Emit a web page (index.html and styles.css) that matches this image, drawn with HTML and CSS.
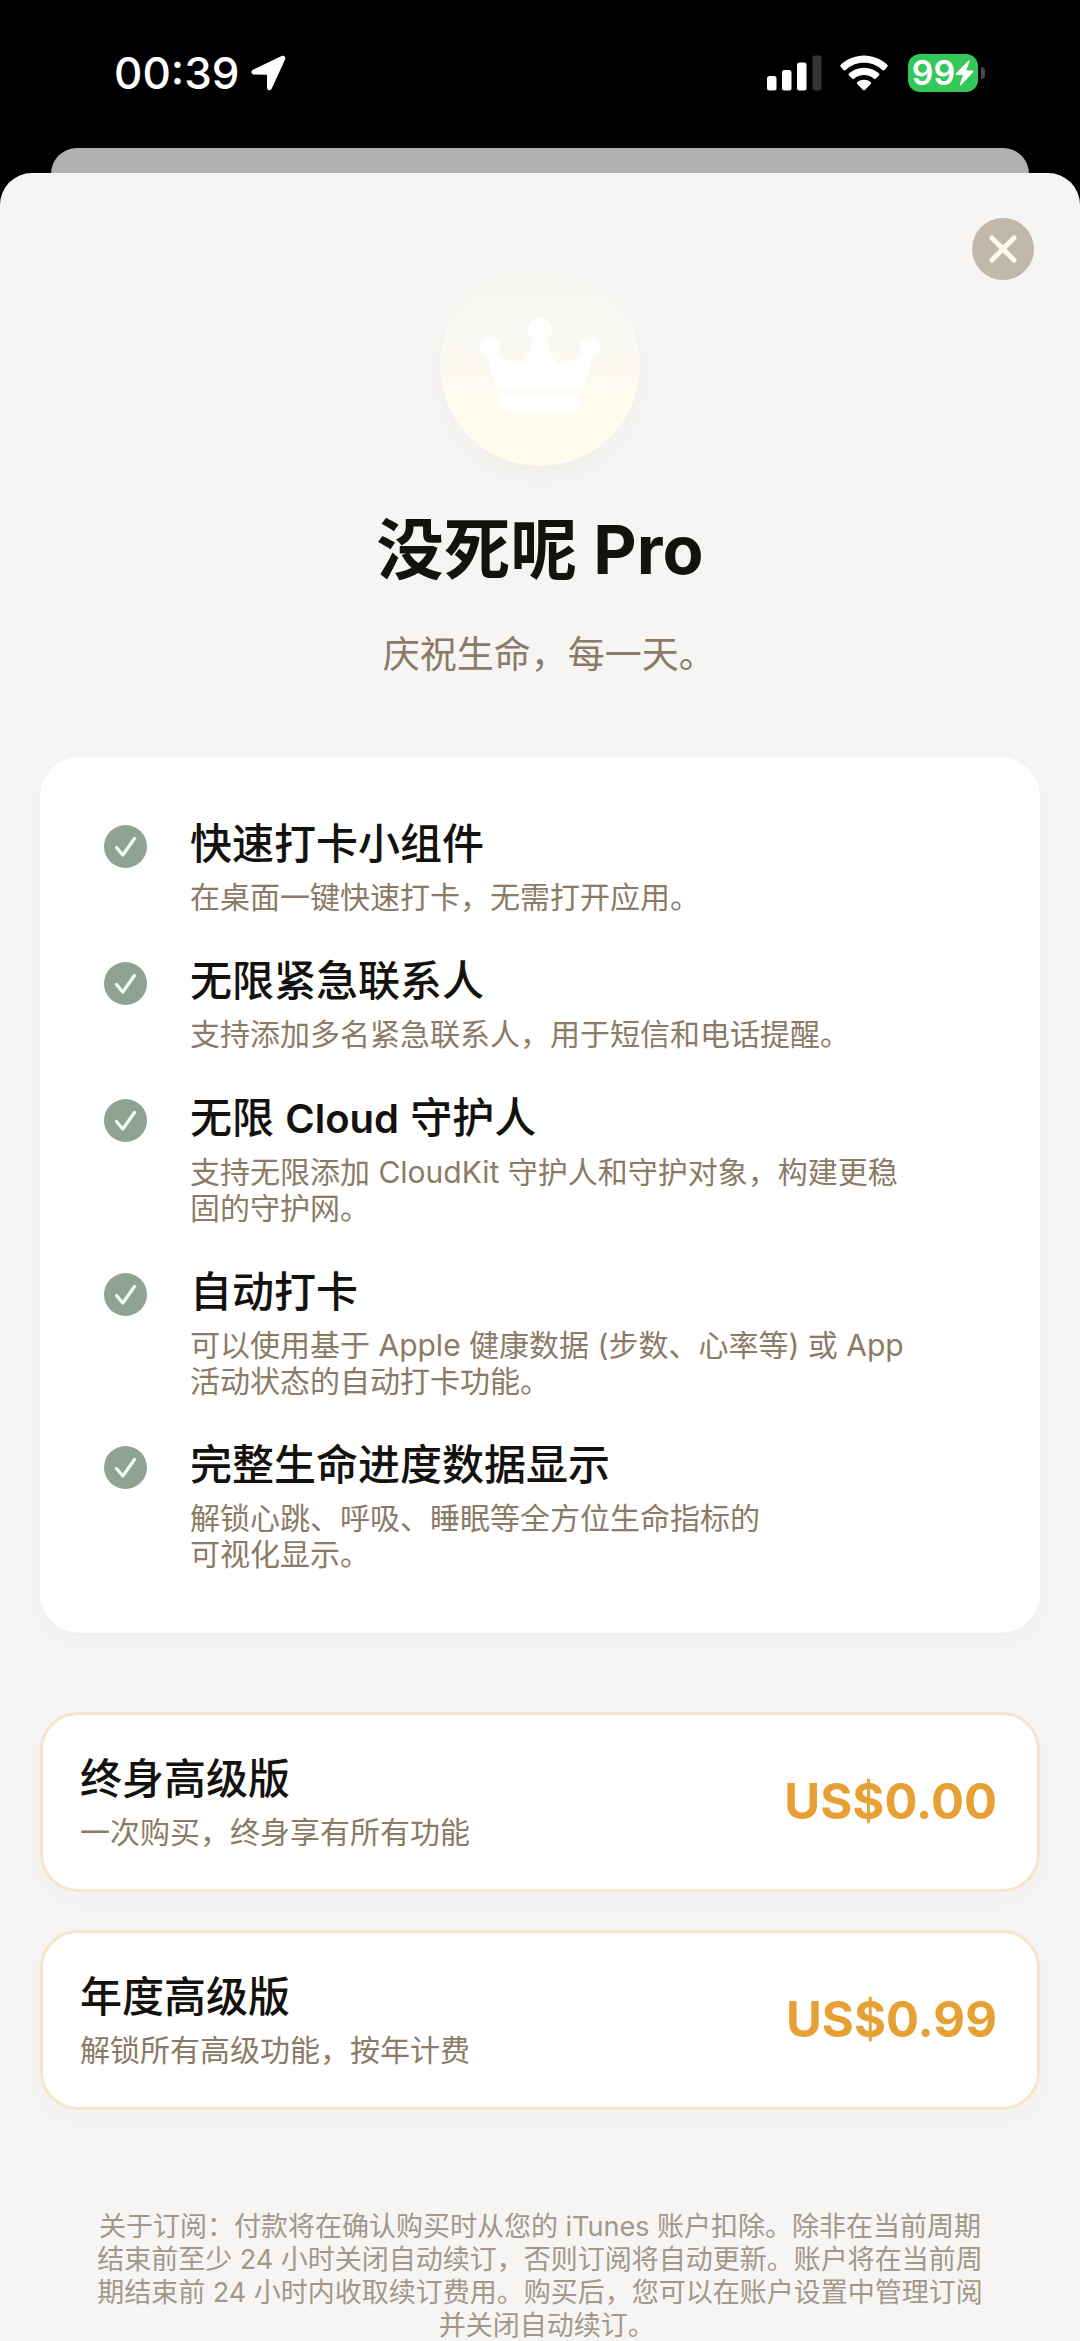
FILE: index.html
```
<!DOCTYPE html>
<html lang="zh-CN">
<head>
<meta charset="utf-8">
<meta name="viewport" content="width=device-width, initial-scale=1">
<title>没死呢 Pro</title>
<link rel="stylesheet" href="styles.css">
</head>
<body>
<svg class="defs" width="0" height="0" aria-hidden="true">
  <symbol id="check" viewBox="0 0 43 43">
    <circle cx="21.500" cy="21.500" r="21.500" fill="#8fa393"/>
    <path d="M12.500 22.500 L18.800 30 L30.500 13.500" fill="none" stroke="#f4fff4" stroke-width="3.200" stroke-linecap="round" stroke-linejoin="round"/>
  </symbol>
</svg>
<header class="status">
  <div class="status-left">
    <span class="time">00:39</span>
    <svg width="35" height="36" viewBox="0 0 35 36" aria-hidden="true">
      <path d="M2.500 14.600 L30.500 1 C33 0 35 1.500 34.200 4.200 L20.800 33.500 C19.400 36.300 16 35.800 16 32.500 L16 19.800 L3 19.600 C0 19.400 -0.600 16.200 2.500 14.600 Z" fill="#fff"/>
    </svg>
  </div>
  <div class="status-right">
    <svg width="55" height="36" viewBox="0 0 55 36" aria-hidden="true">
      <rect x="0" y="21" width="9.500" height="14.500" rx="2.500" fill="#fff"/>
      <rect x="15" y="15" width="9.500" height="20.500" rx="2.500" fill="#fff"/>
      <rect x="30" y="7.500" width="9.500" height="28" rx="2.500" fill="#fff"/>
      <rect x="45.500" y="0.500" width="9" height="35" rx="2.500" fill="#343434"/>
    </svg>
    <svg class="wifi" width="48" height="36" viewBox="0 0 48 36" aria-hidden="true">
      <path d="M24 0.500 C33 0.500 41 4 47 9.600 C47.900 10.400 47.900 11.200 47.200 12 L44.400 14.900 C43.700 15.600 42.900 15.500 42.200 14.900 C37.300 10.400 31 7.800 24 7.800 C17 7.800 10.700 10.400 5.800 14.900 C5.100 15.500 4.300 15.600 3.600 14.900 L0.800 12 C0.100 11.200 0.100 10.400 1 9.600 C7 4 15 0.500 24 0.500 Z" fill="#fff"/>
      <path d="M24 12.700 C29.800 12.700 34.800 14.800 38.800 18.300 C39.600 19 39.600 19.800 38.900 20.500 L35.900 23.500 C35.200 24.200 34.500 24.200 33.700 23.500 C31.100 21.200 27.800 19.900 24 19.900 C20.200 19.900 16.900 21.200 14.300 23.500 C13.500 24.200 12.800 24.200 12.100 23.500 L9.100 20.500 C8.400 19.800 8.400 19 9.200 18.300 C13.200 14.800 18.200 12.700 24 12.700 Z" fill="#fff"/>
      <path d="M24 24.700 C26.500 24.700 28.700 25.500 30.500 26.900 C31.400 27.600 31.400 28.300 30.700 29 L25.200 34.700 C24.400 35.500 23.600 35.500 22.800 34.700 L17.300 29 C16.600 28.300 16.600 27.600 17.500 26.900 C19.300 25.500 21.500 24.700 24 24.700 Z" fill="#fff"/>
    </svg>
    <div class="battery">
      <span class="battery-body">99<svg width="19" height="26" viewBox="0 0 19 26" aria-hidden="true"><path d="M13.500 0.500 L0.800 13.600 C0.300 14.300 0.500 15 1.400 15 L8 15 L4.800 24.300 C4.600 25.600 5.400 25.900 6.200 25.100 L18.200 11.900 C18.800 11.200 18.400 10.500 17.600 10.500 L11.200 10.500 L14.700 1.400 C15 0.300 14.200 -0.100 13.500 0.500 Z" fill="#fff"/></svg></span>
      <span class="battery-tip"></span>
    </div>
  </div>
</header>
<div class="behind"></div>
<main class="sheet">
  <button class="close" type="button" aria-label="关闭">
    <svg width="28" height="28" viewBox="0 0 28 28" aria-hidden="true"><path d="M3 3 L25 25 M25 3 L3 25" stroke="#fffaf1" stroke-width="5" stroke-linecap="round"/></svg>
  </button>
  <section class="hero">
    <div class="badge">
      <svg width="124" height="100" viewBox="0 0 124 100" aria-hidden="true">
        <g fill="#fff">
          <circle cx="62" cy="13" r="12"/>
          <circle cx="11.500" cy="31" r="10.500"/>
          <circle cx="112.500" cy="31" r="10.500"/>
          <path d="M57 22 L67 22 C69 32 77 48 84 48 C92 48 98 42 106 36 L113 39 L107 71 Q106.500 73 104 73 L20 73 Q17.500 73 17 71 L11 39 L18 36 C26 42 32 48 40 48 C47 48 55 32 57 22 Z"/>
          <path d="M22 77 L102 77 L101 91 Q100 98 93 98 L31 98 Q24 98 23 91 Z"/>
        </g>
      </svg>
    </div>
    <h1>没死呢 Pro</h1>
    <p class="tagline">庆祝生命，每一天<span class="stop">。</span></p>
  </section>
  <ul class="features">
    <li>
      <svg class="tick" aria-hidden="true"><use href="#check"/></svg>
      <div><h2>快速打卡小组件</h2><p>在桌面一键快速打卡，无需打开应用。</p></div>
    </li>
    <li>
      <svg class="tick" aria-hidden="true"><use href="#check"/></svg>
      <div><h2>无限紧急联系人</h2><p>支持添加多名紧急联系人，用于短信和电话提醒。</p></div>
    </li>
    <li>
      <svg class="tick" aria-hidden="true"><use href="#check"/></svg>
      <div><h2>无限 <span class="latin">Cloud</span> 守护人</h2><p>支持无限添加 CloudKit 守护人和守护对象，构建更稳<br>固的守护网。</p></div>
    </li>
    <li>
      <svg class="tick" aria-hidden="true"><use href="#check"/></svg>
      <div><h2>自动打卡</h2><p>可以使用基于 Apple 健康数据 (步数、心率等) 或 App<br>活动状态的自动打卡功能。</p></div>
    </li>
    <li>
      <svg class="tick" aria-hidden="true"><use href="#check"/></svg>
      <div><h2>完整生命进度数据显示</h2><p>解锁心跳、呼吸、睡眠等全方位生命指标的<br>可视化显示。</p></div>
    </li>
  </ul>
  <section class="plans">
    <button class="plan" type="button">
      <span class="plan-text"><span class="plan-name">终身高级版</span><span class="plan-note">一次购买，终身享有所有功能</span></span>
      <span class="price">US$0.00</span>
    </button>
    <button class="plan" type="button">
      <span class="plan-text"><span class="plan-name">年度高级版</span><span class="plan-note">解锁所有高级功能，按年计费</span></span>
      <span class="price">US$0.99</span>
    </button>
  </section>
  <p class="legal">关于订阅：付款将在确认购买时从您的 iTunes 账户扣除。除非在当前周期<br>结束前至少 24 小时关闭自动续订，否则订阅将自动更新。账户将在当前周<br>期结束前 24 小时内收取续订费用。购买后，您可以在账户设置中管理订阅<br>并关闭自动续订<span class="stop">。</span></p>
</main>
</body>
</html>
```
FILE: styles.css
```
* {
  box-sizing: border-box;
}

body {
  display: flex;
  flex-direction: column;
  min-height: 100vh;
  margin: 0;
  background: #000;
  color: #14120e;
  font-family: Inter, "Noto Sans CJK SC", sans-serif;
}

h1, h2, p, ul {
  margin: 0;
  padding: 0;
}

button {
  border: 0;
  padding: 0;
  font: inherit;
  color: inherit;
  cursor: pointer;
}

.defs {
  position: absolute;
}

/* Closing full stop takes half a character, so centred lines balance */
.stop {
  font-feature-settings: "halt";
}

/* Status bar */
.status {
  display: flex;
  flex: none;
  justify-content: space-between;
  align-items: center;
  height: 148px;
  padding: 0 95px 2px 114px;
  color: #fff;
}

.status-left,
.status-right {
  display: flex;
  align-items: center;
}

.status-left {
  gap: 12px;
}

.time {
  font-size: 44px;
  font-weight: 500;
  line-height: 56px;
}

.wifi {
  margin: 0 20px 0 18px;
}

.battery {
  display: flex;
  align-items: center;
  gap: 3px;
}

.battery-body {
  display: flex;
  align-items: center;
  justify-content: center;
  width: 70px;
  height: 38px;
  border-radius: 12px;
  background: #34c759;
  font-size: 34px;
  font-weight: 600;
  line-height: 38px;
}

.battery-tip {
  width: 4px;
  height: 12px;
  border-radius: 0 4px 4px 0;
  background: #48484a;
}

/* Stacked sheets */
.behind {
  flex: none;
  height: 61px;
  margin: 0 51px -36px;
  border-radius: 26px 26px 0 0;
  background: #b0b0b0;
}

.sheet {
  position: relative;
  flex: 1 0 auto;
  padding: 93px 40px 0;
  border-radius: 32px 32px 0 0;
  background: #f6f5f3;
}

.close {
  position: absolute;
  top: 45px;
  right: 46px;
  display: flex;
  align-items: center;
  justify-content: center;
  width: 62px;
  height: 62px;
  border-radius: 50%;
  background: #c1b8aa;
}

.hero {
  display: flex;
  flex-direction: column;
  align-items: center;
  text-align: center;
}

.badge {
  display: flex;
  align-items: center;
  justify-content: center;
  width: 200px;
  height: 200px;
  border-radius: 50%;
  background: linear-gradient(#f6f5f3, #f9f8f3 30%, #fdfbee 65%, #fffcee);
  box-shadow: 0 12px 24px -8px rgba(60, 50, 30, 0.05);
}

h1 {
  margin-top: 42px;
  font-size: 67px;
  font-weight: 700;
  line-height: 84px;
}

.tagline {
  margin-top: 38px;
  color: #8b7b66;
  font-size: 37px;
  line-height: 50px;
}

/* Feature list */
.features {
  display: flex;
  flex-direction: column;
  gap: 41px;
  margin-top: 77px;
  padding: 62px 64px 61px;
  border-radius: 40px;
  background: #fff;
  box-shadow: 0 8px 28px rgba(60, 50, 30, 0.02);
  list-style: none;
}

.features li {
  display: flex;
  gap: 43px;
}

.tick {
  flex: none;
  width: 43px;
  height: 43px;
  margin-top: 6px;
}

h2,
.plan-name {
  font-size: 42px;
  font-weight: 500;
  line-height: 50px;
}

.latin {
  font-size: 40px;
  font-weight: 600;
}

.features p,
.plan-note {
  margin-top: 10px;
  color: #8b7b66;
  font-size: 30px;
  font-weight: 400;
  line-height: 36px;
}

/* Purchase options */
.plans {
  display: flex;
  flex-direction: column;
  gap: 38px;
  margin-top: 79px;
}

.plan {
  display: flex;
  align-items: center;
  justify-content: space-between;
  min-height: 180px;
  padding: 0 40px 0 37px;
  border: 3px solid #f5e5cb;
  border-radius: 38px;
  background: #fff;
  box-shadow: 0 8px 28px rgba(60, 50, 30, 0.02);
  text-align: left;
}

.plan-text {
  display: flex;
  flex-direction: column;
}

.price {
  color: #e7a034;
  font-size: 49px;
  font-weight: 700;
  line-height: 60px;
}

.legal {
  margin-top: 100px;
  color: #a3978a;
  font-size: 27px;
  line-height: 33px;
  text-align: center;
}
```
